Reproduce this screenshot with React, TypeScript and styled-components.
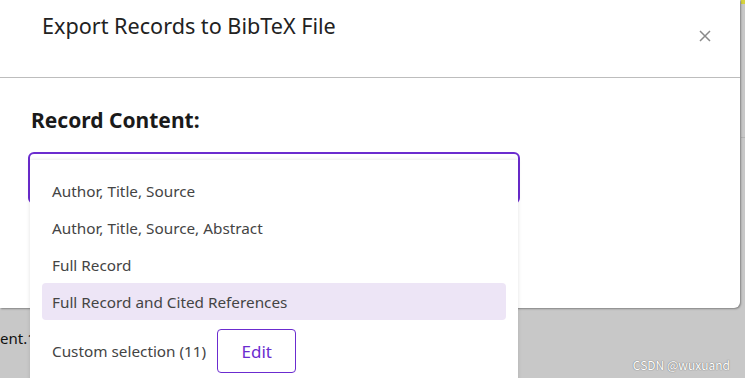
import React, { FC } from 'react';
import styled, { createGlobalStyle } from 'styled-components';

const PURPLE = '#6b2ccf';
const FONT = '"Noto Sans", "Open Sans", sans-serif';

const GlobalStyle = createGlobalStyle`
  html, body {
    margin: 0;
    padding: 0;
    overflow: hidden;
  }
  body {
    font-family: ${FONT};
  }
`;

const OPTIONS: string[] = [
  'Author, Title, Source',
  'Author, Title, Source, Abstract',
  'Full Record',
  'Full Record and Cited References'
];

const Page = styled.div`
  position: relative;
  width: 745px;
  height: 378px;
  background: #c8c8c8;
  overflow: hidden;
`;

const BehindText = styled.div`
  padding-top: 327px;
  font-size: 15px;
  line-height: 22px;
  color: #111;
`;

const Scrollbar = styled.div`
  position: absolute;
  top: 0;
  right: 0;
  width: 4px;
  height: 133px;
  border-top: 4px solid #d6d23c;
  border-bottom: 1px solid #b4b4b4;
  background: #c8c8c8;
`;

const Dialog = styled.div`
  position: absolute;
  top: 0;
  left: 0;
  width: 740px;
  height: 308px;
  background: #fff;
  border-bottom-right-radius: 6px;
  box-shadow: 1px 1px 2px rgba(0, 0, 0, 0.35);
`;

const Header = styled.div`
  display: flex;
  align-items: flex-start;
  justify-content: space-between;
  height: 78px;
  box-sizing: border-box;
  padding: 11px 29px 0 42px;
  border-bottom: 1px solid #bdbdbd;
`;

const Title = styled.h2`
  margin: 0;
  font-size: 21.6px;
  line-height: 30px;
  font-weight: 400;
  color: #222;
`;

const CloseButton = styled.button`
  margin-top: 19px;
  padding: 0;
  border: 0;
  background: none;
  width: 12px;
  height: 12px;
  display: flex;
`;

const Body = styled.div`
  padding: 27px 0 0 28px;
`;

const Label = styled.div`
  padding-left: 3px;
  font-size: 21px;
  line-height: 30px;
  font-weight: 700;
  color: #1a1a1a;
`;

const SelectBox = styled.div`
  position: relative;
  margin-top: 17px;
  width: 492px;
  height: 52px;
  box-sizing: border-box;
  border: 2px solid ${PURPLE};
  border-radius: 6px;
`;

const Menu = styled.ul`
  position: absolute;
  top: 6px;
  left: 0;
  width: 488px;
  margin: 0;
  padding: 12px 12px 20px;
  box-sizing: border-box;
  list-style: none;
  background: #fff;
  box-shadow: 0 0 4px rgba(0, 0, 0, 0.12);
  z-index: 2;
`;

const Item = styled.li<{ $active?: boolean }>`
  display: flex;
  align-items: center;
  height: 37px;
  padding: 0 10px;
  border-radius: 4px;
  font-size: 15.3px;
  color: #444;
  background: ${(p) => (p.$active ? '#ede5f6' : 'transparent')};
`;

const CustomRow = styled.li`
  display: flex;
  align-items: center;
  gap: 11px;
  margin-top: 9px;
  padding: 0 10px;
  font-size: 15.3px;
  color: #444;
`;

const EditButton = styled.button`
  width: 79px;
  height: 44px;
  border: 1px solid ${PURPLE};
  border-radius: 4px;
  background: #fff;
  color: ${PURPLE};
  font-family: ${FONT};
  font-size: 17px;
`;

const Watermark = styled.div`
  position: absolute;
  right: 15px;
  bottom: 5px;
  font-family: "Noto Sans CJK SC", "DejaVu Sans", sans-serif;
  font-size: 12px;
  color: #fff;
  text-shadow: 0 0 1px #777, 0 0 1px #777;
`;

const CloseIcon: FC = () => (
  <svg width="12" height="12" viewBox="0 0 12 12">
    <path d="M1 1L11 11M11 1L1 11" stroke="#8a8a8a" strokeWidth="1.5" />
  </svg>
);

const App: FC = () => (
  <Page>
    <GlobalStyle />
    <BehindText>ent.1</BehindText>
    <Scrollbar />
    <Dialog>
      <Header>
        <Title>Export Records to BibTeX File</Title>
        <CloseButton aria-label="Close">
          <CloseIcon />
        </CloseButton>
      </Header>
      <Body>
        <Label>Record Content:</Label>
        <SelectBox>
          <Menu>
            {OPTIONS.map((o, i) => (
              <Item key={o} $active={i === 3}>
                {o}
              </Item>
            ))}
            <CustomRow>
              Custom selection (11)
              <EditButton>Edit</EditButton>
            </CustomRow>
          </Menu>
        </SelectBox>
      </Body>
    </Dialog>
    <Watermark>CSDN @wuxuand</Watermark>
  </Page>
);

export default App;
